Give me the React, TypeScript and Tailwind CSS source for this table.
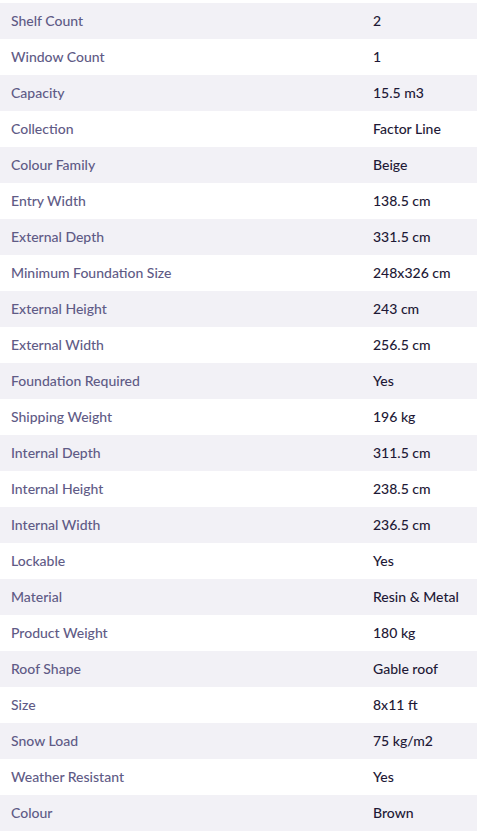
const specs: [string, string][] = [
  ["Shelf Count", "2"],
  ["Window Count", "1"],
  ["Capacity", "15.5 m3"],
  ["Collection", "Factor Line"],
  ["Colour Family", "Beige"],
  ["Entry Width", "138.5 cm"],
  ["External Depth", "331.5 cm"],
  ["Minimum Foundation Size", "248x326 cm"],
  ["External Height", "243 cm"],
  ["External Width", "256.5 cm"],
  ["Foundation Required", "Yes"],
  ["Shipping Weight", "196 kg"],
  ["Internal Depth", "311.5 cm"],
  ["Internal Height", "238.5 cm"],
  ["Internal Width", "236.5 cm"],
  ["Lockable", "Yes"],
  ["Material", "Resin & Metal"],
  ["Product Weight", "180 kg"],
  ["Roof Shape", "Gable roof"],
  ["Size", "8x11 ft"],
  ["Snow Load", "75 kg/m2"],
  ["Weather Resistant", "Yes"],
  ["Colour", "Brown"],
];

export default function App() {
  return (
    <div className="w-[477px] bg-white pt-[3px] font-['Lato',sans-serif] text-[14px]">
      <table className="w-full border-collapse">
        <tbody>
          {specs.map(([label, value], i) => (
            <tr key={label} className={i % 2 === 0 ? "bg-[#f2f1f6]" : "bg-white"}>
              <td className="h-9 w-[362px] p-0 pb-[2px] pl-[11px] font-medium text-[#5f5b86]">{label}</td>
              <td className="h-9 p-0 pb-[2px] pl-[11px] font-medium text-[#1e1936]">{value}</td>
            </tr>
          ))}
        </tbody>
      </table>
    </div>
  );
}
